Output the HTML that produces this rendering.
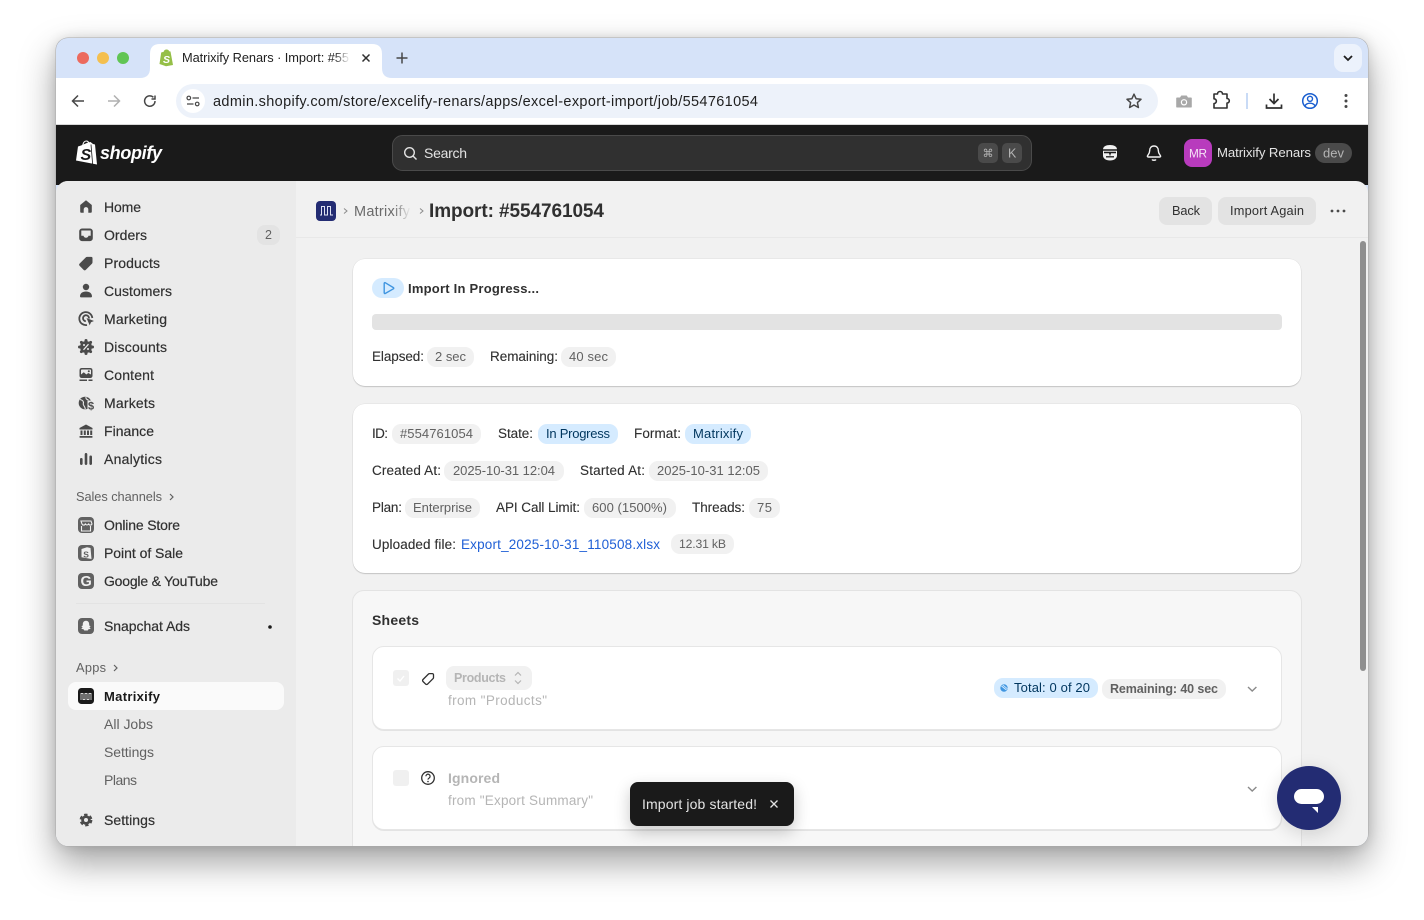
<!DOCTYPE html>
<html lang="en"><head><meta charset="utf-8"><title>Matrixify Renars · Import</title>
<style>
html,body{margin:0;padding:0;width:1424px;height:920px;background:#fff;overflow:hidden}
#win{position:absolute;left:56px;top:38px;width:1312px;height:808px;border-radius:12px;overflow:hidden;box-shadow:0 0 0 .5px #aaa,0 16px 36px rgba(0,0,0,.38),0 0 12px rgba(0,0,0,.12);background:#d6e3f9}
#w{position:absolute;left:-56px;top:-38px;width:1424px;height:920px}
#w>div{position:absolute;box-sizing:border-box}
.card{background:#fff;border-radius:12px;box-shadow:0 1px 1px rgba(0,0,0,.16),0 0 0 .5px rgba(0,0,0,.07)}
.inner{background:#fff;border-radius:12px;border:1px solid #e6e6e6;box-shadow:0 1px 0 rgba(0,0,0,.08)}
svg{position:absolute;left:0;top:0}
text{font-family:"Liberation Sans",Arial,sans-serif;font-size:13.5px;fill:#303030}
.nav{fill:#303030;font-size:14px;stroke:#303030;stroke-width:.2px}
.sub{fill:#616161;font-size:14px}
.g{fill:#616161;font-size:13px}
.l{fill:#303030;font-size:13.5px;stroke:#303030;stroke-width:.12px}
.dis{fill:#b5b5b5}
.blue{fill:#00365e;font-size:13px}
</style></head><body>
<div id="win"><div id="w">
<div style="left:56px;top:78px;width:1312px;height:46px;background:#fff"></div>
<div style="left:56px;top:124px;width:1312px;height:1px;background:#d8d8d8"></div>
<div style="left:56px;top:125px;width:1312px;height:60px;background:#1a1a1a"></div>
<div style="left:56px;top:181px;width:1312px;height:665px;background:#f1f1f1;border-radius:12px 12px 0 0"></div>
<div style="left:56px;top:181px;width:240px;height:665px;background:#ebebeb;border-radius:12px 0 0 0"></div>
<div style="left:296px;top:237px;width:1072px;height:1px;background:#e8e8e8"></div>
<div class="card" style="left:353px;top:259px;width:948px;height:127px"></div>
<div class="card" style="left:353px;top:404px;width:948px;height:169px"></div>
<div style="left:352px;top:590px;width:950px;height:300px;background:#f7f7f7;border:1px solid #e3e3e3;border-radius:12px"></div>
<div class="inner" style="left:372px;top:646px;width:910px;height:84px"></div>
<div class="inner" style="left:372px;top:746px;width:910px;height:84px"></div>
<div style="left:1360px;top:241px;width:6px;height:430px;background:#8f8f8f;border-radius:3px"></div>
<div style="left:630px;top:782px;width:164px;height:44px;background:#1a1a1a;border-radius:8px;box-shadow:0 6px 16px rgba(0,0,0,.22)"></div>
<div style="left:1277px;top:766px;width:64px;height:64px;background:#232c73;border-radius:50%;box-shadow:0 4px 18px rgba(0,0,0,.14)"></div>

<svg width="1424" height="920" viewBox="0 0 1424 920" xmlns="http://www.w3.org/2000/svg">
<defs>
<linearGradient id="fw"><stop offset="0" stop-color="#fff" stop-opacity="0"/><stop offset="1" stop-color="#fff"/></linearGradient>
<linearGradient id="fg"><stop offset="0" stop-color="#f1f1f1" stop-opacity="0"/><stop offset="1" stop-color="#f1f1f1"/></linearGradient>
</defs>
<!-- tab strip -->
<circle cx="83" cy="58" r="6" fill="#ec6a5e"/><circle cx="103" cy="58" r="6" fill="#f4bf4f"/><circle cx="123" cy="58" r="6" fill="#61c554"/>
<path d="M140 78q10 0 10-10V54q0-10 10-10H372q10 0 10 10V68q0 10 10 10Z" fill="#fff"/>
<path d="M159.500 64l1.700-11.500 2.500-.8c.5-1.600 1.500-2.200 2.800-2.200 1.400 0 2.300.8 2.700 1.700l1.300.3 2.500 13.500-7 1.300Z" fill="#95bf47"/>
<text x="163" y="63" style="font-size:10.500px;font-weight:bold;font-style:italic;fill:#fff">S</text>
<text x="182" y="62" textLength="167" style="font-size:12.800px;fill:#1f1f1f">Matrixify Renars · Import: #55</text>
<rect x="334" y="48" width="16" height="20" fill="url(#fw)"/><rect x="350" y="48" width="6" height="20" fill="#fff"/>
<path d="M362.500 54.500l7 7m0-7l-7 7" stroke="#303030" stroke-width="1.500"/>
<path d="M402 52.500v11M396.500 58h11" stroke="#474747" stroke-width="1.500"/>
<rect x="1334" y="44" width="28" height="28" rx="9" fill="#ecf2fc"/>
<path d="M1344 56l4 4 4-4" fill="none" stroke="#1f1f1f" stroke-width="1.800"/>
<!-- toolbar -->
<path d="M84 101H73m5-5.500L72.500 101l5.500 5.500" fill="none" stroke="#474747" stroke-width="1.500"/>
<path d="M108 101h11m-5-5.500l5.500 5.500-5.500 5.500" fill="none" stroke="#b0b0b0" stroke-width="1.500"/>
<path d="M155 101a5.200 5.200 0 1 1-1.600-3.700M155 95.500v3.500h-3.500" fill="none" stroke="#474747" stroke-width="1.500"/>
<rect x="176" y="84" width="982" height="34" rx="17" fill="#edf2fa"/>
<circle cx="193" cy="101" r="12" fill="#fff"/>
<circle cx="188.800" cy="98" r="1.800" fill="none" stroke="#474747" stroke-width="1.200"/>
<path d="M192.500 98h6.500M187 104h6.500" stroke="#474747" stroke-width="1.200"/>
<circle cx="197.200" cy="104" r="1.800" fill="none" stroke="#474747" stroke-width="1.200"/>
<text x="213" y="106" textLength="545" style="font-size:14.500px;fill:#1f1f1f">admin.shopify.com/store/excelify-renars/apps/excel-export-import/job/554761054</text>
<path d="M1134 94.200l2.100 4.500 4.900.6-3.600 3.300 1 4.900-4.400-2.500-4.400 2.500 1-4.900-3.600-3.300 4.900-.6Z" fill="none" stroke="#474747" stroke-width="1.500" stroke-linejoin="round"/>
<path d="M1177 97.500h3l1.300-2h5.400l1.300 2h3a.8.800 0 0 1 .800.800v8.400a.8.800 0 0 1-.8.800h-14a.8.800 0 0 1-.8-.8v-8.400a.8.800 0 0 1 .8-.8Z" fill="#a8a8a8"/><circle cx="1184" cy="102.300" r="3.200" fill="#fff"/><circle cx="1184" cy="102.300" r="2" fill="#a8a8a8"/>
<path d="M1214 94h3.500a2.500 2.500 0 0 1 5 0h4.500v4.500a2.300 2.300 0 0 1 0 4.600V108h-13v-4.500a2.300 2.300 0 0 0 0-4.700Z" fill="none" stroke="#303030" stroke-width="1.600" stroke-linejoin="round"/>
<rect x="1246" y="93" width="2" height="16" fill="#c9dbf6"/>
<path d="M1274 93.500v10m-4.500-4.500l4.500 4.500 4.500-4.500M1266.500 104.500v3.500h15v-3.500" fill="none" stroke="#303030" stroke-width="1.700"/>
<circle cx="1310" cy="101" r="7.300" fill="none" stroke="#1a5fd0" stroke-width="1.500"/><circle cx="1310" cy="98.800" r="2.500" fill="none" stroke="#1a5fd0" stroke-width="1.400"/><path d="M1304.800 106c1.200-2 3-2.800 5.200-2.800s4 .8 5.200 2.800" fill="none" stroke="#1a5fd0" stroke-width="1.400"/>
<circle cx="1346" cy="95.500" r="1.500" fill="#474747"/><circle cx="1346" cy="101" r="1.500" fill="#474747"/><circle cx="1346" cy="106.500" r="1.500" fill="#474747"/>
<!-- shopify header -->
<path d="M78 146.500l3-1 7-3 2.500-.5 2.500 2 2 .5 2 20-21-4Z" fill="#fff"/><path d="M82.500 146c.5-2.500 1.800-5 3.800-5s2.700 2 2.700 4" fill="none" stroke="#fff"/>
<path d="M91 144.500l1.700 20.500" stroke="#1a1a1a" stroke-width=".8"/>
<text x="80.500" y="160" style="font-size:16px;font-weight:bold;font-style:italic;fill:#1a1a1a">S</text>
<text x="100" y="159" textLength="62" style="font-size:18px;font-weight:bold;font-style:italic;fill:#fff">shopify</text>
<rect x="392.500" y="135.500" width="639" height="35" rx="10" fill="#303030" stroke="#4a4a4a"/>
<circle cx="409.500" cy="152.500" r="4.800" fill="none" stroke="#e3e3e3" stroke-width="1.400"/><path d="M413 156l3.500 3.500" stroke="#e3e3e3" stroke-width="1.400"/>
<text x="424" y="158" textLength="43" style="font-size:14px;fill:#e3e3e3">Search</text>
<rect x="978" y="143" width="20" height="20" rx="5" fill="#4a4a4a"/><rect x="1002" y="143" width="20" height="20" rx="5" fill="#4a4a4a"/>
<text x="982.500" y="157" style="font-size:11px;fill:#b5b5b5;font-family:'DejaVu Sans',sans-serif">⌘</text>
<text x="1008" y="157.500" style="font-size:12.500px;fill:#b5b5b5">K</text>
<path d="M1103 149.500c0-3 3-4.500 7-4.500s7 1.500 7 4.500v6c0 3-3 5-7 5s-7-2-7-5Z" fill="#f1f1f1"/>
<path d="M1103 150h14M1104 152.500h5.500l.5 1.500 .5-1.500h5.500" fill="none" stroke="#1a1a1a" stroke-width="1.400"/><path d="M1106 156.800h8" stroke="#1a1a1a" stroke-width="1.300"/>
<path d="M1154 146c-2.800 0-4.300 2-4.300 4.500 0 3-1.500 4-2.200 5.300-.3.700 0 1.200.8 1.200h11.400c.8 0 1.100-.5.800-1.200-.7-1.300-2.200-2.300-2.200-5.300 0-2.500-1.500-4.500-4.300-4.500Z" fill="none" stroke="#f1f1f1" stroke-width="1.400"/><path d="M1152 159.500c.6 1 3.400 1 4 0" fill="none" stroke="#f1f1f1" stroke-width="1.400"/>
<rect x="1184" y="139" width="28" height="28" rx="8" fill="#b83bbd"/>
<text x="1189" y="157.500" textLength="18" style="font-size:11.800px;fill:#f5e3f5">MR</text>
<text x="1217" y="157" textLength="94" style="font-size:13.200px;fill:#e3e3e3">Matrixify Renars</text>
<rect x="1315" y="143" width="37" height="20" rx="10" fill="#4a4a4a"/>
<text x="1323" y="157.500" textLength="21" style="font-size:13px;fill:#b5b5b5">dev</text>

<!-- sidebar nav -->
<g fill="#4a4a4a">
<path d="M86 200.200l5.800 4.800v6.500a1.300 1.300 0 0 1-1.300 1.300H88.300v-3.400a2.300 2.300 0 0 0-4.600 0v3.400h-2.200a1.300 1.300 0 0 1-1.300-1.300V205Z"/>
<path fill-rule="evenodd" d="M82 228.500h8a2.800 2.800 0 0 1 2.800 2.800v7a2.800 2.800 0 0 1-2.800 2.800h-8a2.800 2.800 0 0 1-2.800-2.800v-7a2.800 2.800 0 0 1 2.800-2.800Zm-.7 2v5.300h2.200c.3 1.300 1.300 2 2.500 2s2.200-.7 2.500-2h2.200v-5.300Z"/>
<path d="M79.700 263.500l6-6a2 2 0 0 1 1.400-.6h4.200a1.200 1.200 0 0 1 1.200 1.200v4.300a2 2 0 0 1-.6 1.400l-6 6a1.700 1.700 0 0 1-2.400 0l-3.800-3.900a1.700 1.700 0 0 1 0-2.400Z"/>
<circle cx="86" cy="287" r="3.200"/><path d="M80 296.500c0-3.300 2.500-5 6-5s6 1.700 6 5a1 1 0 0 1-1 .9H81a1 1 0 0 1-1-.9Z"/>
<g fill="none" stroke="#4a4a4a" stroke-width="1.800"><path d="M92.300 318a6.500 6.500 0 1 0-5.300 7"/><path d="M89 318.500a3 3 0 1 0-3.200 2.700"/></g>
<path d="M86.500 318l7.500 3-3 1.300-1.300 3Z"/>
<circle cx="86" cy="347" r="6"/><circle cx="86" cy="340.500" r="1.500"/><circle cx="86" cy="353.500" r="1.500"/><circle cx="79.500" cy="347" r="1.500"/><circle cx="92.500" cy="347" r="1.500"/><circle cx="81.400" cy="342.400" r="1.500"/><circle cx="90.600" cy="342.400" r="1.500"/><circle cx="81.400" cy="351.600" r="1.500"/><circle cx="90.600" cy="351.600" r="1.500"/>
<path d="M83.500 349.800l5-5.600" stroke="#ebebeb" stroke-width="1.200"/><circle cx="84" cy="345" r="1" fill="#ebebeb"/><circle cx="88" cy="349" r="1" fill="#ebebeb"/>
<rect x="79.500" y="368" width="13" height="10" rx="2.200"/><rect x="81" y="369.500" width="10" height="6.500" rx=".8" fill="#ebebeb"/>
<path d="M81 376v-1.500l2.800-2.200 2.500 2.200 2-1.500 2.700 1.500v1.500Z"/><circle cx="88.800" cy="371.200" r="1"/><rect x="79.500" y="379.500" width="7.500" height="1.500"/><rect x="88.500" y="379.500" width="4" height="1.500"/>
<circle cx="85" cy="403" r="6.300"/><path d="M80 399.500c2.500.5 4 2 3.300 4s1.700 2.300 2 5.500M86 397c-.5 1.500.5 2.500 2.500 3" fill="none" stroke="#ebebeb" stroke-width="1.100"/>
<rect x="87.500" y="400.500" width="7" height="10" fill="#ebebeb"/>
<text x="88" y="409.500" style="font-size:11px;font-weight:bold;fill:#4a4a4a">$</text>
<path d="M86 424.500l6.500 3.500v1.500h-13V428Z"/><rect x="80.500" y="430.500" width="2" height="4.500"/><rect x="83.800" y="430.500" width="2" height="4.500"/><rect x="87" y="430.500" width="2" height="4.500"/><rect x="90.200" y="430.500" width="2" height="4.500"/><rect x="79.500" y="436" width="13" height="1.800" rx=".5"/>
<rect x="80" y="458" width="2.600" height="7" rx="1.200"/><rect x="84.700" y="453" width="2.600" height="12" rx="1.200"/><rect x="89.400" y="455.500" width="2.600" height="9.500" rx="1.200"/>
</g>
<text class="nav" x="104" y="212" textLength="37">Home</text>
<text class="nav" x="104" y="240" textLength="43">Orders</text>
<rect x="257" y="225" width="23" height="20" rx="8" fill="#e3e3e3"/><text x="265" y="239" style="font-size:12.500px;fill:#616161">2</text>
<text class="nav" x="104" y="268" textLength="56">Products</text>
<text class="nav" x="104" y="296" textLength="68">Customers</text>
<text class="nav" x="104" y="324" textLength="63">Marketing</text>
<text class="nav" x="104" y="352" textLength="63">Discounts</text>
<text class="nav" x="104" y="380" textLength="50">Content</text>
<text class="nav" x="104" y="408" textLength="51">Markets</text>
<text class="nav" x="104" y="436" textLength="50">Finance</text>
<text class="nav" x="104" y="464" textLength="58">Analytics</text>
<text x="76" y="501" textLength="86" style="font-size:12.800px;fill:#616161">Sales channels</text>
<path d="M170 494l3 3-3 3" fill="none" stroke="#616161" stroke-width="1.200"/>
<!-- channels -->
<rect x="78" y="517" width="16" height="16" rx="4" fill="#616161"/>
<path d="M81 521h10l1 3a1.800 1.800 0 0 1-3.300 0 2 2 0 0 1-3.400 0 1.800 1.800 0 0 1-3.300 0ZM81.500 526v5h9v-5" fill="none" stroke="#f0f0f0" stroke-width="1.100"/>
<rect x="78" y="545" width="16" height="16" rx="4" fill="#616161"/>
<path d="M81.500 549l5.500-1.800 3.500.8 1 11-10-1.800Z" fill="#f0f0f0"/><text x="83.300" y="557.500" style="font-size:8.500px;font-weight:bold;fill:#616161">S</text>
<rect x="78" y="573" width="16" height="16" rx="4" fill="#616161"/>
<text x="80.500" y="586" style="font-size:14.500px;font-weight:bold;fill:#f0f0f0">G</text>
<text class="nav" x="104" y="530" textLength="76">Online Store</text>
<text class="nav" x="104" y="558" textLength="79">Point of Sale</text>
<text class="nav" x="104" y="586" textLength="114">Google &amp; YouTube</text>
<rect x="76" y="603" width="189" height="1" fill="#e3e3e3"/>
<rect x="78" y="618" width="16" height="16" rx="4" fill="#616161"/>
<path d="M86 620.800c-2 0-3.200 1.500-3.200 3.400v1.300l-1.500.8 1.300 1-1.300 1.600 2.200.4.800 1.200h3.400l.8-1.200 2.200-.4-1.300-1.600 1.300-1-1.500-.8v-1.300c0-1.900-1.200-3.400-3.200-3.400Z" fill="#f0f0f0"/>
<text class="nav" x="104" y="631" textLength="86">Snapchat Ads</text>
<circle cx="270" cy="627" r="1.800" fill="#1a1a1a"/>
<text x="76" y="672" textLength="30" style="font-size:12.800px;fill:#616161">Apps</text>
<path d="M114 665l3 3-3 3" fill="none" stroke="#616161" stroke-width="1.200"/>
<rect x="68" y="682" width="216" height="28" rx="8" fill="#fafafa"/>
<rect x="78" y="688" width="16" height="16" rx="3.500" fill="#1a1a1a"/>
<path d="M81 700v-6.500h2v6h2v-6h2v6h2v-6h2v6.500" fill="none" stroke="#d8d8d8" stroke-width=".9"/>
<text x="104" y="701" textLength="56" style="fill:#1a1a1a;font-weight:bold;font-size:13px">Matrixify</text>
<text class="sub" x="104" y="729" textLength="49">All Jobs</text>
<text class="sub" x="104" y="757" textLength="50">Settings</text>
<text class="sub" x="104" y="785" textLength="33">Plans</text>
<circle cx="86" cy="820" r="4.800" fill="#4a4a4a" stroke="#4a4a4a" stroke-width="3.200" stroke-dasharray="3 2.200"/><circle cx="86" cy="820" r="2" fill="#ebebeb"/>
<text class="nav" x="104" y="825" textLength="51">Settings</text>

<!-- page header -->
<rect x="316" y="201" width="20" height="20" rx="4" fill="#232c73"/>
<path d="M320 215h1.500v-8.500h3v8.500h3v-8.500h3v8.500h2.500" fill="none" stroke="#dfe2f2" stroke-width="1"/>
<path d="M344 208.500l3 2.500-3 2.500" fill="none" stroke="#8a8a8a" stroke-width="1"/>
<text x="354" y="216" textLength="56" style="font-size:14.500px;fill:#6b6b6b">Matrixify</text>
<rect x="393" y="203" width="18" height="17" fill="url(#fg)"/>
<path d="M420 208.500l3 2.500-3 2.500" fill="none" stroke="#8a8a8a" stroke-width="1"/>
<text x="429" y="217" textLength="175" style="font-size:19px;font-weight:bold;fill:#303030">Import: #554761054</text>
<rect x="1159" y="197" width="53" height="28" rx="8" fill="#e3e3e3"/>
<text x="1172" y="215" textLength="28" style="font-size:12.800px;fill:#303030">Back</text>
<rect x="1218" y="197" width="98" height="28" rx="8" fill="#e3e3e3"/>
<text x="1230" y="215" textLength="74" style="font-size:12.800px;fill:#303030">Import Again</text>
<circle cx="1332" cy="211" r="1.400" fill="#4a4a4a"/><circle cx="1338" cy="211" r="1.400" fill="#4a4a4a"/><circle cx="1344" cy="211" r="1.400" fill="#4a4a4a"/>

<!-- card 1 -->
<rect x="372" y="278" width="32" height="20" rx="10" fill="#d5ebff"/>
<path d="M384.200 283.300v9.600a.7.700 0 0 0 1 .6l8.200-4.700a.7.700 0 0 0 0-1.200l-8.200-4.900a.7.700 0 0 0-1 .6Z" fill="none" stroke="#3f95e0" stroke-width="1.400"/>
<text x="408" y="293" textLength="131" style="font-size:13px;font-weight:bold;fill:#303030">Import In Progress...</text>
<rect x="372" y="314" width="910" height="16" rx="4" fill="#e3e3e3"/>
<text class="l" x="372" y="361" textLength="52">Elapsed:</text>
<rect x="427" y="347" width="47" height="20" rx="9" fill="#f1f1f1"/><text class="g" x="435" y="361" textLength="31">2 sec</text>
<text class="l" x="490" y="361" textLength="68">Remaining:</text>
<rect x="561" y="347" width="55" height="20" rx="9" fill="#f1f1f1"/><text class="g" x="569" y="361" textLength="39">40 sec</text>

<!-- card 2 -->
<text class="l" x="372" y="438" textLength="16">ID:</text>
<rect x="392" y="424" width="89" height="20" rx="9" fill="#f1f1f1"/><text class="g" x="400" y="438" textLength="73">#554761054</text>
<text class="l" x="498" y="438" textLength="35">State:</text>
<rect x="538" y="424" width="80" height="20" rx="9" fill="#d5ebff"/><text class="blue" x="546" y="438" textLength="64">In Progress</text>
<text class="l" x="634" y="438" textLength="47">Format:</text>
<rect x="685" y="424" width="66" height="20" rx="9" fill="#d5ebff"/><text class="blue" x="693" y="438" textLength="50">Matrixify</text>

<text class="l" x="372" y="475" textLength="69">Created At:</text>
<rect x="444" y="461" width="120" height="20" rx="9" fill="#f1f1f1"/><text class="g" x="453" y="475" textLength="102">2025-10-31 12:04</text>
<text class="l" x="580" y="475" textLength="65">Started At:</text>
<rect x="649" y="461" width="119" height="20" rx="9" fill="#f1f1f1"/><text class="g" x="657" y="475" textLength="103">2025-10-31 12:05</text>

<text class="l" x="372" y="512" textLength="30">Plan:</text>
<rect x="405" y="498" width="75" height="20" rx="9" fill="#f1f1f1"/><text class="g" x="413" y="512" textLength="59">Enterprise</text>
<text class="l" x="496" y="512" textLength="84">API Call Limit:</text>
<rect x="584" y="498" width="92" height="20" rx="9" fill="#f1f1f1"/><text class="g" x="592" y="512" textLength="75">600 (1500%)</text>
<text class="l" x="692" y="512" textLength="53">Threads:</text>
<rect x="749" y="498" width="31" height="20" rx="9" fill="#f1f1f1"/><text class="g" x="757" y="512" textLength="15">75</text>

<text class="l" x="372" y="549" textLength="84">Uploaded file:</text>
<text x="461" y="549" textLength="199" style="font-size:13.500px;fill:#1f5fd6">Export_2025-10-31_110508.xlsx</text>
<rect x="671" y="534" width="63" height="20" rx="9" fill="#f1f1f1"/><text x="679" y="548" textLength="47" style="font-size:12.200px;fill:#616161">12.31 kB</text>

<!-- sheets -->
<text x="372" y="625" textLength="47" style="font-size:14px;font-weight:bold;fill:#303030">Sheets</text>
<rect x="393" y="670" width="16" height="16" rx="3" fill="#f0f0f0"/>
<path d="M397.500 678.500l2.500 2.500 4-5" fill="none" stroke="#fff" stroke-width="1.400"/>
<path d="M423 679.500l5.500-5.500a1.500 1.500 0 0 1 1-.4h2.800a1.200 1.200 0 0 1 1.200 1.200v2.800a1.500 1.500 0 0 1-.4 1l-5.500 5.500a1.400 1.400 0 0 1-2 0l-2.600-2.600a1.400 1.400 0 0 1 0-2Z" fill="none" stroke="#303030" stroke-width="1.300"/>
<rect x="446" y="666" width="86" height="24" rx="8" fill="#f1f1f1"/>
<text class="dis" x="454" y="682" textLength="52" style="font-size:12.500px;font-weight:bold">Products</text>
<path d="M515 675.500l3-3 3 3M515 680.500l3 3 3-3" fill="none" stroke="#b5b5b5" stroke-width="1.200"/>
<text class="dis" x="448" y="705" textLength="99" style="font-size:13.500px">from "Products"</text>
<rect x="994" y="678" width="104" height="20" rx="9" fill="#d5ebff"/>
<circle cx="1004" cy="688" r="3.700" fill="#3f95e0"/><path d="M1001.500 686l5 4" stroke="#d5ebff" stroke-width="1.100"/><path d="M1002.700 684.900l4.600 3.800" stroke="#d5ebff" stroke-width=".8"/>
<text class="blue" x="1014" y="692" textLength="76">Total: 0 of 20</text>
<rect x="1102" y="679" width="124" height="20" rx="9" fill="#f1f1f1"/>
<text x="1110" y="693" textLength="108" style="font-size:12.500px;font-weight:bold;fill:#616161">Remaining: 40 sec</text>
<path d="M1248 687l4.200 4 4.200-4" fill="none" stroke="#8a8a8a" stroke-width="1.400"/>

<rect x="393" y="770" width="16" height="16" rx="3" fill="#f0f0f0"/>
<circle cx="428" cy="778" r="6.300" fill="none" stroke="#303030" stroke-width="1.300"/>
<path d="M425.900 776.300a2.100 2.100 0 1 1 3.300 1.700c-.8.500-1.200.9-1.200 1.600" fill="none" stroke="#303030" stroke-width="1.200"/><circle cx="428" cy="781.500" r=".8" fill="#303030"/>
<text class="dis" x="448" y="783" textLength="52" style="font-size:14px;font-weight:bold">Ignored</text>
<text class="dis" x="448" y="805" textLength="145" style="font-size:13.500px">from "Export Summary"</text>
<path d="M1248 787l4.200 4 4.200-4" fill="none" stroke="#8a8a8a" stroke-width="1.400"/>

<!-- toast -->
<text x="642" y="809" textLength="115" style="font-size:14px;fill:#e3e3e3">Import job started!</text>
<path d="M770.500 800.500l7 7m0-7l-7 7" stroke="#e3e3e3" stroke-width="1.300"/>
<!-- chat -->
<rect x="1294" y="789" width="30" height="15" rx="7.500" fill="#fff"/>
<path d="M1312 807h6v6Z" fill="#fff"/>
</svg>
</div></div>
</body></html>
